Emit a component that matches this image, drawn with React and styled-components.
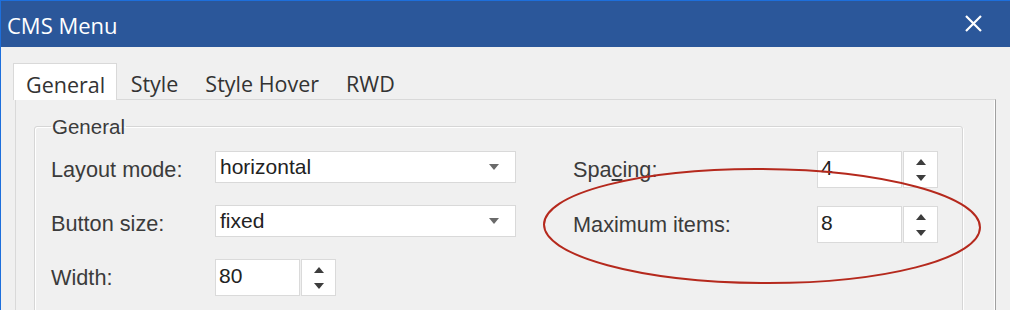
import React from 'react';
import styled, { createGlobalStyle } from 'styled-components';

const GlobalStyle = createGlobalStyle`
  html, body {
    margin: 0;
    padding: 0;
    background: #f0f0f0;
  }
  * {
    box-sizing: border-box;
  }
`;

const Window = styled.div`
  position: relative;
  display: flex;
  flex-direction: column;
  width: 1010px;
  height: 310px;
  overflow: hidden;
  background: #f0f0f0;
  border-top: 1px solid #1d6fdc;
  border-left: 1px solid #1d6fdc;
`;

const TitleBar = styled.header`
  flex: 0 0 46px;
  display: flex;
  align-items: center;
  justify-content: space-between;
  padding: 1px 28px 0 6px;
  background: #2b579a;
  color: #fff;
  font-family: 'Open Sans', 'Noto Sans', sans-serif;
  font-size: 22px;
`;

const CloseIcon = styled.svg`
  width: 17px;
  height: 17px;
  margin-bottom: 2px;
`;

const Body = styled.div`
  flex: 1;
  padding: 16px 14px 0 14px;
`;

const TabStrip = styled.div`
  display: flex;
  height: 36px;
  font-family: 'Open Sans', 'Noto Sans', sans-serif;
  font-size: 21.5px;
  color: #333;
`;

const Tab = styled.div`
  position: relative;
  display: flex;
  align-items: center;
  padding: 4px 13.5px 0;
  ${(p) =>
    p.$active &&
    `
    z-index: 1;
    height: 37px;
    margin-left: -2px;
    padding: 4px 11px 0 12px;
    background: #fff;
    border: 1px solid #d9d9d9;
    border-bottom: none;
  `}
`;

const Panel = styled.div`
  height: 260px;
  padding: 15px 32px 0 18px;
  background: #f0f0f0;
  border: 1px solid #d9d9d9;
  border-right-color: #a0a0a0;
  box-shadow: inset -1px 0 0 #fff;
`;

const Group = styled.fieldset`
  margin: 0;
  height: 220px;
  padding: 13px 16px 0 16px;
  border: 1px solid #d6d6d6;
  border-radius: 3px;
  box-shadow: inset 1px 1px 0 #fff, 1px 1px 0 #fff;
  font-family: 'Liberation Sans', Arial, sans-serif;
  color: #3b3b3b;
`;

const Legend = styled.legend`
  padding: 0 1px;
  font-size: 20.5px;
  line-height: 23px;
`;

const Columns = styled.div`
  display: flex;
  gap: 57px;
`;

const Column = styled.div`
  display: flex;
  flex-direction: column;
  gap: ${(p) => p.$gap}px;
`;

const Field = styled.div`
  display: flex;
  align-items: center;
  height: 37px;
`;

const Label = styled.label`
  flex: 0 0 ${(p) => p.$width}px;
  font-size: 21.7px;
  line-height: 24px;
`;

const Combo = styled.div`
  align-self: flex-start;
  display: flex;
  align-items: center;
  justify-content: space-between;
  width: 301px;
  height: 32px;
  padding: 0 16px 0 4px;
  background: #fff;
  border: 1px solid #d9d9d9;
  font-size: 21px;
  color: #222;
`;

const ComboArrow = styled.span`
  width: 0;
  height: 0;
  border-left: 5px solid transparent;
  border-right: 5px solid transparent;
  border-top: 6px solid #6a6a6a;
`;

const Spin = styled.div`
  display: flex;
  height: 37px;
`;

const SpinValue = styled.div`
  width: 85px;
  padding: 4px 3px 0;
  background: #fff;
  border: 1px solid #dadada;
  font-size: 21px;
  line-height: 24px;
  color: #222;
`;

const SpinButtons = styled.div`
  display: flex;
  flex-direction: column;
  align-items: center;
  justify-content: center;
  gap: 10px;
  width: 35px;
  margin-left: 1px;
  background: #fff;
  border: 1px solid #dadada;
`;

const Arrow = styled.span`
  width: 0;
  height: 0;
  border-left: 5px solid transparent;
  border-right: 5px solid transparent;
  ${(p) => (p.$up ? 'border-bottom' : 'border-top')}: 6px solid #3d3d3d;
`;

const Mark = styled.svg`
  position: absolute;
  left: 540px;
  top: 164px;
  width: 444px;
  height: 122px;
  pointer-events: none;
`;

const SpinBox = ({ value }) => (
  <Spin>
    <SpinValue>{value}</SpinValue>
    <SpinButtons>
      <Arrow $up />
      <Arrow />
    </SpinButtons>
  </Spin>
);

const ComboBox = ({ value }) => (
  <Combo>
    <span>{value}</span>
    <ComboArrow />
  </Combo>
);

const TABS = ['General', 'Style', 'Style Hover', 'RWD'];

export default function App() {
  return (
    <>
      <GlobalStyle />
      <Window>
        <TitleBar>
          <span>CMS Menu</span>
          <CloseIcon viewBox="0 0 17 17">
            <path d="M1 1L16 16M16 1L1 16" stroke="#fff" strokeWidth="2.2" fill="none" />
          </CloseIcon>
        </TitleBar>

        <Body>
          <TabStrip>
            {TABS.map((tab, i) => (
              <Tab key={tab} $active={i === 0}>
                {tab}
              </Tab>
            ))}
          </TabStrip>

          <Panel>
            <Group>
              <Legend>General</Legend>
              <Columns>
                <Column $gap={17}>
                  <Field>
                    <Label $width={164}>Layout mode:</Label>
                    <ComboBox value="horizontal" />
                  </Field>
                  <Field>
                    <Label $width={164}>Button size:</Label>
                    <ComboBox value="fixed" />
                  </Field>
                  <Field>
                    <Label $width={164}>Width:</Label>
                    <SpinBox value="80" />
                  </Field>
                </Column>
                <Column $gap={18}>
                  <Field>
                    <Label $width={244}>
                      Spa<u>c</u>ing:
                    </Label>
                    <SpinBox value="4" />
                  </Field>
                  <Field>
                    <Label $width={244}>Maximum items:</Label>
                    <SpinBox value="8" />
                  </Field>
                </Column>
              </Columns>
            </Group>
          </Panel>
        </Body>

        <Mark viewBox="0 0 444 122">
          <ellipse
            cx="221"
            cy="61"
            rx="218"
            ry="57"
            fill="none"
            stroke="#b5291d"
            strokeWidth="2"
            transform="rotate(0.4 221 61)"
          />
        </Mark>
      </Window>
    </>
  );
}
